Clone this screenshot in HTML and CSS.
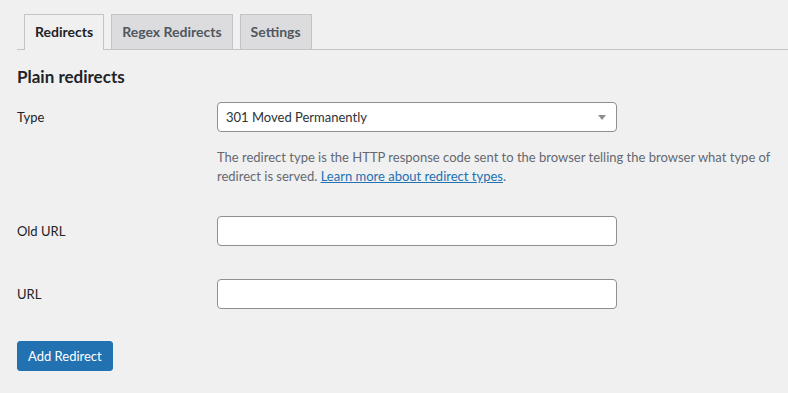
FILE: index.html
```html
<!DOCTYPE html>
<html>
<head>
<meta charset="utf-8">
<link rel="stylesheet" href="styles.css">
</head>
<body>
<div class="wrap">
  <nav class="tabs">
    <a class="tab active">Redirects</a>
    <a class="tab">Regex Redirects</a>
    <a class="tab">Settings</a>
  </nav>
  <h2 class="title">Plain redirects</h2>
  <div class="row row-type">
    <label class="label">Type</label>
    <div class="field">
      <div class="select">
        <span>301 Moved Permanently</span>
        <svg class="arrow" width="8" height="5" viewBox="0 0 8 5"><path d="M0 0h8L4 5z" fill="#8c8f94"/></svg>
      </div>
      <p class="desc">The redirect type is the HTTP response code sent to the browser telling the browser what type of redirect is served. <a class="link">Learn more about redirect types</a>.</p>
    </div>
  </div>
  <div class="row row-old">
    <label class="label">Old URL</label>
    <div class="field"><div class="input"></div></div>
  </div>
  <div class="row row-url">
    <label class="label">URL</label>
    <div class="field"><div class="input"></div></div>
  </div>
  <button class="btn">Add Redirect</button>
</div>
</body>
</html>
```
FILE: styles.css
```css
* { box-sizing: border-box; }
html, body { margin: 0; padding: 0; background: #f0f0f1; }
body {
  font-family: Lato, "Liberation Sans", sans-serif;
  font-size: 13px;
  color: #1d2327;
  width: 788px;
  height: 393px;
  overflow: hidden;
}
.wrap { padding-left: 17px; }
.tabs {
  display: flex;
  padding-top: 14px;
  border-bottom: 1px solid #c3c4c7;
  height: 50px;
}
.tab {
  margin-left: 7px;
  padding: 5px 10px;
  font-size: 14px;
  line-height: 24px;
  font-weight: 700;
  background: #dcdcde;
  color: #50575e;
  border: 1px solid #c3c4c7;
  border-bottom: none;
  height: 35px;
}
.tab.active {
  background: #f0f0f1;
  color: #1d2327;
  height: 36px;
  position: relative;
  z-index: 1;
}
.title {
  margin: 0;
  padding-top: 15px;
  font-size: 17px;
  line-height: 24px;
  font-weight: 700;
  color: #1d2327;
}
.row { display: flex; align-items: flex-start; }
.label { width: 200px; line-height: 30px; flex: none; }
.field { width: 560px; }
.row-type { margin-top: 13px; }
.select {
  width: 400px;
  height: 30px;
  background: #fff;
  border: 1px solid #8c8f94;
  border-radius: 4px;
  display: flex;
  align-items: center;
  justify-content: space-between;
  padding: 0 10px 0 8px;
  color: #2c3338;
  font-size: 13px;
}
.desc {
  margin: 16px 0 0;
  line-height: 19px;
  color: #646970;
}
.link { color: #2271b1; text-decoration: underline; line-height: 15px; }
.row-old { margin-top: 30px; }
.row-url { margin-top: 33px; }
.input {
  width: 400px;
  height: 30px;
  background: #fff;
  border: 1px solid #8c8f94;
  border-radius: 4px;
}
.btn {
  margin-top: 32px;
  display: block;
  height: 30px;
  padding: 0 10px;
  background: #2271b1;
  border: 1px solid #2271b1;
  border-radius: 3px;
  color: #fff;
  font-family: inherit;
  font-size: 13px;
  line-height: 28px;
}
```
